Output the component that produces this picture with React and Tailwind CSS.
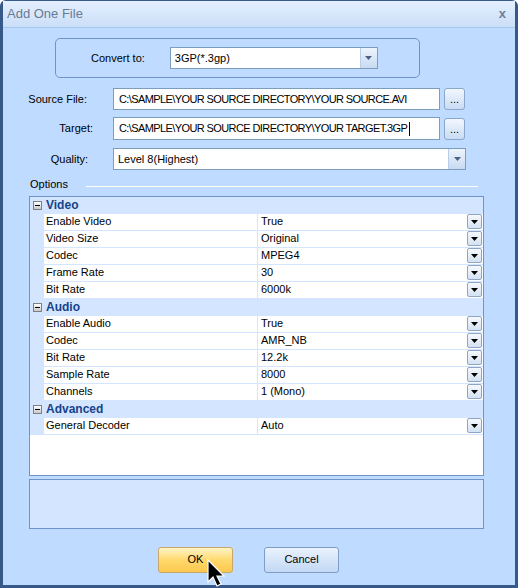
import React from "react";

const font = { fontFamily: '"Liberation Sans", Arial, sans-serif' };

const groups = [
  {
    name: "Video",
    rows: [
      ["Enable Video", "True"],
      ["Video Size", "Original"],
      ["Codec", "MPEG4"],
      ["Frame Rate", "30"],
      ["Bit Rate", "6000k"],
    ],
  },
  {
    name: "Audio",
    rows: [
      ["Enable Audio", "True"],
      ["Codec", "AMR_NB"],
      ["Bit Rate", "12.2k"],
      ["Sample Rate", "8000"],
      ["Channels", "1 (Mono)"],
    ],
  },
  {
    name: "Advanced",
    rows: [["General Decoder", "Auto"]],
  },
];

function ComboArrow() {
  return (
    <div className="flex h-full w-[17px] items-center justify-center border-l border-[#b9cde8] bg-gradient-to-b from-[#eef4fc] to-[#c8daf1]">
      <svg width="7" height="4" viewBox="0 0 7 4">
        <path d="M0 0h7L3.5 4z" fill="#4d6185" />
      </svg>
    </div>
  );
}

function Combo({ value, className }) {
  return (
    <div className={"flex h-[22px] items-center border border-[#7b9ebd] bg-white " + className}>
      <span className="flex-1 pl-[4px] text-[11px] text-black">{value}</span>
      <ComboArrow />
    </div>
  );
}

function BrowseButton() {
  return (
    <button className="ml-[4px] flex h-[22px] w-[21px] items-end justify-center rounded-[3px] border border-[#8aa7cc] bg-gradient-to-b from-[#f3f7fd] to-[#c9dbf3] pb-[4px] text-[11px] leading-none text-black">
      ...
    </button>
  );
}

function GridDrop() {
  return (
    <div className="flex h-[15px] w-[15px] items-center justify-center rounded-[2px] border border-[#8fa5c4] bg-gradient-to-b from-[#f6f9fd] to-[#d5e2f3]">
      <svg width="7" height="4" viewBox="0 0 7 4">
        <path d="M0 0h7L3.5 4z" fill="#000" />
      </svg>
    </div>
  );
}

function MinusBox() {
  return (
    <div className="flex h-[9px] w-[9px] items-center justify-center border border-[#7f7f7f] bg-gradient-to-b from-[#ffffff] to-[#c9c9c9]">
      <div className="h-px w-[5px] bg-black" />
    </div>
  );
}

function PropertyGrid() {
  return (
    <div className="mt-[3px] ml-[26px] flex h-[280px] w-[455px] flex-col border border-[#6f95c8] bg-white">
      {groups.map((g) => (
        <div key={g.name}>
          <div className="flex h-[17px] items-center bg-[#d4e6ff]">
            <div className="flex w-[14px] justify-center pl-[1px]">
              <MinusBox />
            </div>
            <span className="pl-[2px] text-[12px] font-bold text-[#15428b]">{g.name}</span>
          </div>
          {g.rows.map(([k, v]) => (
            <div key={g.name + k} className="flex h-[17px]">
              <div className="w-[14px] bg-[#d4e6ff]" />
              <div className="flex w-[213px] items-center border-b border-[#d4e6ff] pl-[2px] text-[11px] text-black">
                {k}
              </div>
              <div className="w-px bg-[#d4e6ff]" />
              <div className="flex flex-1 items-center border-b border-[#d4e6ff] pl-[3px] pr-[1px] text-[11px] text-black">
                <span className="flex-1">{v}</span>
                <GridDrop />
              </div>
            </div>
          ))}
        </div>
      ))}
    </div>
  );
}

function Cursor() {
  return (
    <svg className="absolute left-[207px] top-[559px]" width="20" height="30" viewBox="0 0 20 30">
      <path d="M1 1v22l5-5 4 9 4-2-4-8h7z" fill="#000" stroke="#fff" strokeWidth="1.2" />
    </svg>
  );
}

export default function App() {
  return (
    <div style={font} className="relative h-[588px] w-[518px] overflow-hidden bg-white">
      <div className="flex h-[588px] w-[518px] flex-col rounded-t-[6px] border-x-[3px] border-b-[3px] border-t border-[#37598a] bg-[#bfdbff]">
        {/* title bar */}
        <div className="flex h-[27px] items-center justify-between border-b border-[#a9c6ec] bg-gradient-to-b from-[#e4efff] to-[#cadff8] pl-[4px] pr-[9px]">
          <span className="text-[13px] text-[#6a7a91]">Add One File</span>
          <span className="text-[13px] font-bold text-[#6f7f96]">x</span>
        </div>

        {/* convert to */}
        <div className="mt-[10px] ml-[52px] flex h-[40px] w-[365px] items-center rounded-[5px] border border-[#6f95c8]">
          <span className="ml-[35px] text-[11px] text-black">Convert to:</span>
          <Combo value="3GP(*.3gp)" className="ml-[25px] w-[208px]" />
        </div>

        {/* source */}
        <div className="mt-[10px] flex items-center">
          <span className="w-[84px] text-right text-[11px] text-black">Source File:</span>
          <div className="ml-[26px] flex h-[22px] w-[327px] items-center whitespace-nowrap border border-[#7b9ebd] bg-white pl-[5px] text-[11px] tracking-[-0.6px] text-black">
            C:\SAMPLE\YOUR SOURCE DIRECTORY\YOUR SOURCE.AVI
          </div>
          <BrowseButton />
        </div>

        {/* target */}
        <div className="mt-[7px] flex items-center">
          <span className="w-[90px] text-right text-[11px] text-black">Target:</span>
          <div className="ml-[20px] flex h-[23px] w-[327px] items-center whitespace-nowrap border border-[#7b9ebd] bg-white pl-[5px] text-[11px] tracking-[-0.6px] text-black">
            C:\SAMPLE\YOUR SOURCE DIRECTORY\YOUR TARGET.3GP
            <span className="ml-[2px] h-[14px] w-px bg-black" />
          </div>
          <BrowseButton />
        </div>

        {/* quality */}
        <div className="mt-[8px] flex items-center">
          <span className="w-[85px] text-right text-[11px] text-black">Quality:</span>
          <Combo value="Level 8(Highest)" className="ml-[25px] w-[353px]" />
        </div>

        {/* options */}
        <div className="mt-[6px] flex items-center">
          <span className="ml-[27px] text-[11px] text-black">Options</span>
          <div className="ml-[18px] mt-[4px] h-px w-[392px] border-b border-white bg-[#8eaad2]" />
        </div>

        <PropertyGrid />

        {/* description */}
        <div className="mt-[3px] ml-[26px] h-[50px] w-[455px] border border-[#6f95c8] bg-[#d4e6ff]" />

        {/* buttons */}
        <div className="mt-[18px] flex">
          <button className="ml-[155px] h-[26px] w-[75px] rounded-[3px] border border-[#c7a867] bg-gradient-to-b from-[#fff4c4] via-[#ffd96b] to-[#fbc84e] text-[11px] text-black">
            OK
          </button>
          <button className="ml-[31px] h-[26px] w-[75px] rounded-[3px] border border-[#7f9dc6] bg-gradient-to-b from-[#eaf2fd] via-[#d6e5f9] to-[#c2d8f4] text-[11px] text-black">
            Cancel
          </button>
        </div>
      </div>
      <Cursor />
    </div>
  );
}
